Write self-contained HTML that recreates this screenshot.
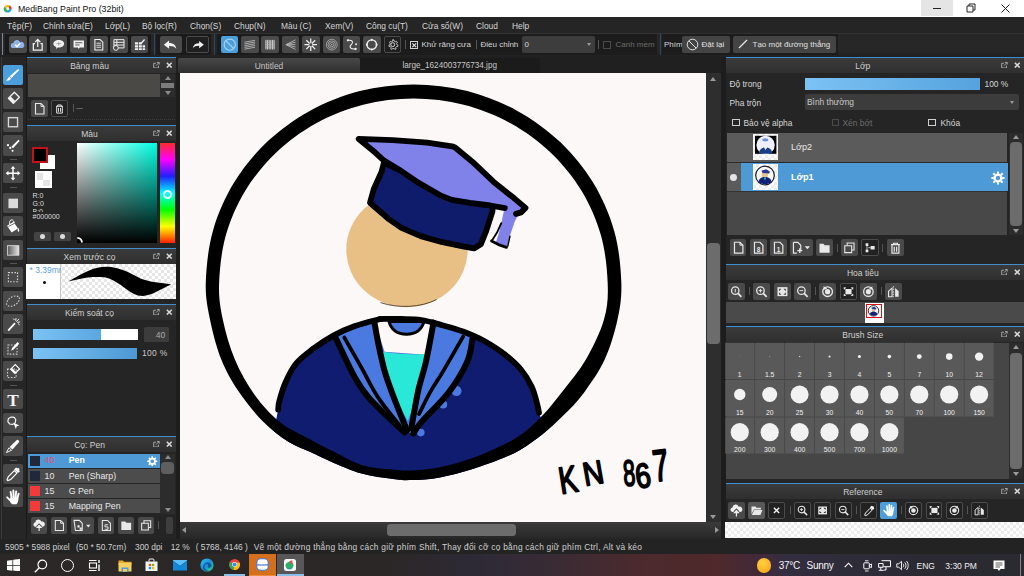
<!DOCTYPE html>
<html lang="vi">
<head>
<meta charset="utf-8">
<title>MediBang Paint Pro (32bit)</title>
<style>
*{box-sizing:border-box;margin:0;padding:0}
html,body{width:1024px;height:576px;overflow:hidden;background:#262626}
body{position:relative;font-family:"Liberation Sans",sans-serif;font-size:8.5px;color:#d8d8d8;line-height:1}
.a{position:absolute;white-space:nowrap}
#title{left:0;top:0;width:1024px;height:17px;background:#fff;color:#000}
#title .t{left:18px;top:4.800px;font-size:8.800px;color:#111}
#menu{left:0;top:17px;width:1024px;height:16px;background:#252525}
#menu span{position:absolute;top:4.600px;font-size:8.4px;color:#d6d6d6;white-space:nowrap}
#tool{left:0;top:33px;width:1024px;height:24px;background:linear-gradient(#272727 70%,#202020);border-top:1px solid #323232}
.tb{position:absolute;top:35.800px;width:18px;height:17.300px;background:#4a4a4a;border-radius:2px}
.tb.d{background:#1f1f1f;border:1px solid #4a4a4a}
.tb.s{background:#4d9fdc}
.tb svg,.lt svg,.sb svg{position:absolute;left:0;top:0;width:100%;height:100%}
.sepv{position:absolute;width:1px;background:#2f6f9f;opacity:.6}
/* panels */
.ph{position:absolute;height:16px;border-top:1px solid #3f8fce;background:linear-gradient(#3b3b3b,#2f2f2f);color:#cfcfcf;font-size:8.5px;text-align:center;padding-top:4px}
.pb{position:absolute;background:#262626}
.lt{position:absolute;left:3px;width:22px;height:22px;background:#4a4a4a;border-radius:2px}
.lt.s{background:#4d9fdc}
.sb{position:absolute;width:17px;height:17px;background:#4a4a4a;border-radius:2px}
.sb.d{background:#222;border:1px solid #4c4c4c}
#status{left:0;top:538.500px;width:1024px;height:15px;background:#232323;color:#cfcfcf;font-size:8.400px}
#task{left:0;top:553.500px;width:1024px;height:22.500px;background:linear-gradient(90deg,#2c2828 0%,#2b2727 38%,#2d2a36 47%,#392b34 54%,#4c2a2d 63%,#4f292c 70%,#40293a 74.500%,#332d40 77%,#2f2c3a 82%,#2b2a33 90%,#2a2a30 100%)}
.st{top:4px}
</style>
</head>
<body>
<!-- TITLE BAR -->
<div id="title" class="a">
  <span class="a t">MediBang Paint Pro (32bit)</span>
</div>
<!-- MENU BAR -->
<div id="menu" class="a">
  <span style="left:7px">Tệp(F)</span><span style="left:43px">Chỉnh sửa(E)</span><span style="left:105px">Lớp(L)</span><span style="left:142px">Bộ lọc(R)</span><span style="left:190px">Chọn(S)</span><span style="left:234px">Chụp(N)</span><span style="left:281px">Màu (C)</span><span style="left:325px">Xem(V)</span><span style="left:366px">Công cụ(T)</span><span style="left:422px">Cửa sổ(W)</span><span style="left:476px">Cloud</span><span style="left:512px">Help</span>
</div>
<!-- TOOLBAR -->
<div id="tool" class="a"></div>
<div class="a" style="left:2px;top:33px;width:1px;height:22px;background:#7b8a99"></div>
<div class="a" style="left:5px;top:34px;width:146px;height:21px;background:#1a1a1a"></div>
<div class="a" style="left:156px;top:34px;width:55px;height:21px;background:#1a1a1a"></div>
<div class="a" style="left:217px;top:34px;width:440px;height:21px;background:#1c1c1c"></div>
<div class="a" style="left:662px;top:34px;width:176px;height:21px;background:#1c1c1c"></div>
<div class="sepv" style="left:153.5px;top:34px;height:21px;background:#2d5f85"></div>
<div class="sepv" style="left:214px;top:34px;height:21px;background:#2d5f85"></div>
<div class="sepv" style="left:659.5px;top:34px;height:21px;background:#2d5f85"></div>
<div class="tb " style="left:9px;width:17.5px"><svg viewBox="0 0 18 18" ><path d="M4.2 12.6a2.6 2.6 0 0 1 .3-5.2 3.6 3.6 0 0 1 6.9-1 3.1 3.1 0 0 1 2.2 6.2z" fill="#8fb4ea"/><path d="M6.3 9.2l1.9 1.9 3.4-3.6" stroke="#fff" stroke-width="1.5" fill="none"/></svg></div>
<div class="tb " style="left:29.25px;width:17.5px"><svg viewBox="0 0 18 18" ><path d="M6.2 8H4.4v6.6h9.2V8h-1.8" stroke="#f2f2f2" stroke-width="1.3" fill="none"/><path d="M9 11.5V4.2M6.3 6.4L9 3.6l2.7 2.8" stroke="#f2f2f2" stroke-width="1.3" fill="none"/></svg></div>
<div class="tb " style="left:49.5px;width:17.5px"><svg viewBox="0 0 18 18" ><path d="M9 4.2c3.3 0 5.6 1.7 5.6 3.9S12.300 12 9 12c-.4 0-.8 0-1.100-.1L6.200 13.600l.2-2.100C4.600 10.800 3.400 9.600 3.400 8.100 3.400 5.900 5.700 4.200 9 4.200z" fill="#f2f2f2"/><path d="M6.500 8h5M9 6v4" stroke="#777" stroke-width=".6"/></svg></div>
<div class="tb " style="left:69.75px;width:17.5px"><svg viewBox="0 0 18 18" ><path d="M3.600 4.600h10.800v7.400H10l-1 1.500-1-1.500H3.600z" fill="#f2f2f2"/><path d="M5.300 7h7.400M5.300 9.400h4.600" stroke="#555" stroke-width="1.100"/></svg></div>
<div class="tb " style="left:90.0px;width:17.5px"><svg viewBox="0 0 18 18" ><path d="M5 3.700h5.400l2.800 2.800v8H5z" stroke="#f2f2f2" stroke-width="1.100" fill="none"/><path d="M6.600 7.500h4.800M6.600 9.600h4.800M6.600 11.700h4.800" stroke="#f2f2f2" stroke-width=".9"/></svg></div>
<div class="tb " style="left:110.25px;width:17.5px"><svg viewBox="0 0 18 18" ><path d="M4 3.800h10.500v8.600H4zM4 6.600h10.500M4 9.400h10.500M7 3.800v8.600" stroke="#f2f2f2" stroke-width="1" fill="none"/><circle cx="6" cy="12.400" r="2.500" fill="#474747" stroke="#f2f2f2" stroke-width="1"/></svg></div>
<div class="tb " style="left:130.5px;width:17.5px"><svg viewBox="0 0 18 18" ><path d="M4 6.500h3.200v2.300H4zM8 6.500h3.200v2.300H8zM4 9.600h3.200v2.300H4zM8 9.600h3.200v2.300H8zM4 12.700h3.200v1.800H4zM8 12.700h3.200v1.800H8zM12 9.600h2.500v2.300H12zM12 12.700h2.500v1.800H12z" fill="#f2f2f2"/><path d="M10.500 7.500l3.500-3.800" stroke="#f2f2f2" stroke-width="1.400"/></svg></div>
<div class="tb " style="left:159.5px;width:22.5px"><svg viewBox="0 0 22.5 18" ><path d="M3.500 9l5.500-4.300v2.600c4.500 0 7 2.200 7.500 6-1.800-2.300-4.200-3-7.500-2.900v2.900z" fill="#f2f2f2"/></svg></div>
<div class="tb d" style="left:186.25px;width:22.5px"><svg viewBox="0 0 22.5 18" ><path d="M19 9l-5.500-4.300v2.600c-4.500 0-7 2.200-7.500 6 1.800-2.300 4.200-3 7.500-2.900v2.900z" fill="#f2f2f2"/></svg></div>
<div class="tb s" style="left:220.75px;width:17.5px"><svg viewBox="0 0 18 18" ><circle cx="9" cy="9" r="5.800" stroke="#a9d2f3" stroke-width="1.200" fill="none"/><path d="M5 5l8 8" stroke="#a9d2f3" stroke-width="1.200"/></svg></div>
<div class="tb " style="left:241.1px;width:17.5px"><svg viewBox="0 0 18 18" ><path d="M3.500 6.500l11-2M3.500 8.300l11-2M3.500 10.100l11-2M3.500 11.900l11-2M3.500 13.700l11-2" stroke="#b8b8b8" stroke-width=".9"/></svg></div>
<div class="tb " style="left:261.45px;width:17.5px"><svg viewBox="0 0 18 18" ><path d="M5 4v10M6.700 4v10M8.400 4v10M10.100 4v10M11.800 4v10M13.500 4v10" stroke="#d8d8d8" stroke-width="1"/><path d="M4 6.500h10.500M4 9h10.500M4 11.500h10.500" stroke="#b8b8b8" stroke-width=".6"/></svg></div>
<div class="tb " style="left:281.8px;width:17.5px"><svg viewBox="0 0 18 18" ><path d="M14 4L4 9l10 5M14 6.500L4 9l10 2.500M4 9h10" stroke="#b8b8b8" stroke-width=".9" fill="none"/></svg></div>
<div class="tb " style="left:302.15px;width:17.5px"><svg viewBox="0 0 18 18" ><path d="M9 2.500v5M9 10.500v5M2.500 9h5M10.500 9h5M4.400 4.400l3.400 3.400M10.200 10.200l3.400 3.400M13.600 4.400l-3.400 3.400M7.800 10.200l-3.400 3.400" stroke="#f2f2f2" stroke-width="1.300"/></svg></div>
<div class="tb " style="left:322.5px;width:17.5px"><svg viewBox="0 0 18 18" ><circle cx="9" cy="9" r="5.600" stroke="#b8b8b8" stroke-width=".8" fill="none"/><circle cx="9" cy="9" r="3.900" stroke="#b8b8b8" stroke-width=".8" fill="none"/><circle cx="9" cy="9" r="2.200" stroke="#b8b8b8" stroke-width=".8" fill="none"/><circle cx="9" cy="9" r=".8" fill="#b8b8b8"/></svg></div>
<div class="tb " style="left:342.85px;width:17.5px"><svg viewBox="0 0 18 18" ><path d="M5 4.500c5-.5 6 2 3.500 4.500s-1 5 4.500 4.500" stroke="#f2f2f2" stroke-width="1.100" fill="none"/><circle cx="5" cy="4.500" r="1.200" fill="#f2f2f2"/><circle cx="13" cy="13.500" r="1.200" fill="#f2f2f2"/><circle cx="13.500" cy="8.500" r="1" fill="#f2f2f2"/></svg></div>
<div class="tb " style="left:363.2px;width:17.5px"><svg viewBox="0 0 18 18" ><circle cx="9" cy="9" r="5" stroke="#f2f2f2" stroke-width="1.300" fill="none"/><circle cx="9" cy="4" r="1.100" fill="#f2f2f2"/><circle cx="9" cy="14" r="1.100" fill="#f2f2f2"/><circle cx="4" cy="9" r="1.100" fill="#f2f2f2"/><circle cx="14" cy="9" r="1.100" fill="#f2f2f2"/></svg></div>
<div class="tb d" style="left:383.55px;width:17.5px"><svg viewBox="0 0 18 18" ><circle cx="9" cy="9" r="2.300" stroke="#f2f2f2" stroke-width="1" fill="none"/><path d="M9 3.200l1.300.2.400 1.500 1.400.800 1.400-.6.900 1.100-.8 1.300.3 1.500 1.300.8-.3 1.300-1.500.2-.9 1.200.4 1.500-1.200.6-1.100-1-1.600 0-1.100 1-1.200-.6.400-1.500-.9-1.200-1.500-.2-.3-1.300 1.300-.8.300-1.500-.8-1.300.9-1.100 1.400.6 1.400-.8.400-1.500z" stroke="#f2f2f2" stroke-width=".9" fill="none"/></svg></div>
<div class="a" style="left:404.5px;top:40px;width:1px;height:9px;background:#555"></div>
<div class="a" style="left:475.5px;top:40px;width:1px;height:9px;background:#555"></div>
<div class="a" style="left:597.5px;top:40px;width:1px;height:9px;background:#555"></div>
<div class="a" style="left:409.5px;top:40.5px;width:8.5px;height:8.5px;border:1px solid #d0d0d0"><svg class="a" style="left:0;top:0" width="6.5" height="6.5" viewBox="0 0 6.5 6.5"><path d="M1.300 1.300l3.900 3.900M5.200 1.300L1.300 5.200" stroke="#e0e0e0" stroke-width="1.200"/></svg></div>
<span class="a" style="left:421.5px;top:40.500px;font-size:8px;color:#d6d6d6">Khử răng cưa</span>
<span class="a" style="left:480.500px;top:40.500px;font-size:8px;color:#d6d6d6">Điều chỉnh</span>
<div class="a" style="left:521.5px;top:36px;width:73px;height:16.500px;background:#3d3d3d;border-radius:2px"><span class="a" style="left:3px;top:4.500px;font-size:8px;color:#d6d6d6">0</span><div class="a" style="left:65px;top:7px;border:2.500px solid transparent;border-top:3px solid #9a9a9a"></div></div>
<div class="a" style="left:602.5px;top:40.5px;width:8.5px;height:8.5px;border:1px solid #4a4a4a"></div>
<span class="a" style="left:615.500px;top:40.500px;font-size:8px;color:#6c6c6c">Canh mềm</span>
<span class="a" style="left:664px;top:40.500px;font-size:8px;color:#d6d6d6">Phím</span>
<div class="a" style="left:682px;top:36px;width:47.5px;height:16.500px;background:#444;border-radius:2px"><svg class="a" style="left:3.500px;top:2px" width="13" height="13" viewBox="0 0 13 13"><circle cx="6.500" cy="6.500" r="5.300" stroke="#e6e6e6" stroke-width="1" fill="none"/><path d="M2.800 2.800l7.400 7.400" stroke="#e6e6e6" stroke-width="1"/></svg><span class="a" style="left:19.500px;top:4.500px;font-size:8px;color:#e0e0e0">Đặt lại</span></div>
<div class="a" style="left:733px;top:36px;width:102.5px;height:16.500px;background:#444;border-radius:2px"><svg class="a" style="left:5px;top:3px" width="10" height="10" viewBox="0 0 10 10"><path d="M1 9L9 1" stroke="#e6e6e6" stroke-width="1.300"/></svg><span class="a" style="left:19.500px;top:4.500px;font-size:8px;color:#e0e0e0">Tạo một đường thẳng</span></div>
<div class="a" style="left:0;top:57px;width:27px;height:482px;background:#262626"></div>
<div class="a" style="left:1px;top:57px;width:1px;height:482px;background:#3a3a3a"></div>
<div class="a" style="left:26px;top:57px;width:1px;height:482px;background:#1a1a1a"></div>
<div class="lt s" style="top:64.8px;width:20px;height:20.400px"><svg viewBox="0 0 22 22" ><path d="M16.800 4.200l1 1-8.500 8.800-2-1.800z" fill="#fff"/><path d="M6.800 12.800l2 1.900c-1 2-3 2.600-5.400 2.300 1.700-1 1.800-3 3.400-4.200z" fill="#fff"/></svg></div>
<div class="lt " style="top:88.3px;width:20px;height:20.400px"><svg viewBox="0 0 22 22" ><path d="M12.500 4.500l5.500 5.500-6.500 6.500-5.500-5.500z" stroke="#f0f0f0" stroke-width="1.500" fill="none" stroke-linejoin="round"/><path d="M8.500 9l5 5-2.700 2.700-5-5z" fill="#f0f0f0"/></svg></div>
<div class="lt " style="top:111.8px;width:20px;height:20.400px"><svg viewBox="0 0 22 22" ><rect x="6" y="6" width="10" height="10" stroke="#d8d8d8" stroke-width="1.500" fill="none"/></svg></div>
<div class="lt " style="top:135.3px;width:20px;height:20.400px"><svg viewBox="0 0 22 22" ><path d="M17 5l1.300 1.300-7.300 8-1.800-1.600z" fill="#fff"/><circle cx="5.500" cy="11" r="1.200" fill="#fff"/><circle cx="8" cy="14" r="1.200" fill="#fff"/><circle cx="10.500" cy="17" r="1.100" fill="#fff"/></svg></div>
<div class="lt " style="top:163px;width:20px;height:20.400px"><svg viewBox="0 0 22 22" ><path d="M11 3l2.600 3h-1.800v4.200H16V8.400l3 2.600-3 2.600v-1.800h-4.200V16h1.800L11 19l-2.600-3h1.800v-4.200H6v1.800L3 11l3-2.600v1.800h4.200V6H8.400z" fill="#fff"/></svg></div>
<div class="lt " style="top:192.5px;width:20px;height:20.400px"><svg viewBox="0 0 22 22" ><rect x="6" y="6" width="10.500" height="10.500" fill="#dcdcdc"/></svg></div>
<div class="lt " style="top:216px;width:20px;height:20.400px"><svg viewBox="0 0 22 22" ><path d="M4.500 10.500l7-4.500 5 7.500-7 4.300z" fill="#fff"/><path d="M7.500 9c-.8-3 .5-5 2-5s2.500 1.500 3 3.500" stroke="#fff" stroke-width="1.100" fill="none"/><path d="M16.500 12.500c1.500 2 1.800 3.500 1 4.500-1 .8-2-.5-1-4.500z" fill="#fff"/><path d="M6 11.300l7-3.600" stroke="#4a4a4a" stroke-width=".9"/></svg></div>
<div class="lt " style="top:239.5px;width:20px;height:20.400px"><svg viewBox="0 0 22 22" ><defs><linearGradient id="lg1" x1="0" x2="1"><stop offset="0" stop-color="#5a5a5a"/><stop offset="1" stop-color="#e8e8e8"/></linearGradient></defs><rect x="5" y="6" width="12.500" height="10.500" fill="url(#lg1)" stroke="#dcdcdc" stroke-width=".9"/></svg></div>
<div class="lt " style="top:267px;width:20px;height:20.400px"><svg viewBox="0 0 22 22" ><rect x="6" y="6" width="10" height="10" stroke="#d0d0d0" stroke-width="1.300" fill="none" stroke-dasharray="1.700 1.600"/></svg></div>
<div class="lt " style="top:290.5px;width:20px;height:20.400px"><svg viewBox="0 0 22 22" ><ellipse cx="11" cy="11" rx="7.800" ry="4.600" transform="rotate(-32 11 11)" stroke="#d0d0d0" stroke-width="1.200" fill="none" stroke-dasharray="1.700 1.600"/></svg></div>
<div class="lt " style="top:314px;width:20px;height:20.400px"><svg viewBox="0 0 22 22" ><path d="M5 17.500l7.500-8.300 1.400 1.300-7.500 8.300z" fill="#fff"/><path d="M14.800 8.200l2.700-3M15.600 9l3-.5M14 7.300l.3-3M16.500 10.300l1.800 1.400M12.700 6.400l-1.400-1.600" stroke="#fff" stroke-width="1"/></svg></div>
<div class="lt " style="top:337.5px;width:20px;height:20.400px"><svg viewBox="0 0 22 22" ><rect x="5.500" y="7.500" width="10" height="10" stroke="#d0d0d0" stroke-width="1.200" fill="none" stroke-dasharray="1.700 1.600"/><path d="M16 4.200l1.800 1.800-6 6.500-2.800 1.300 1-2.900z" fill="#fff"/></svg></div>
<div class="lt " style="top:361px;width:20px;height:20.400px"><svg viewBox="0 0 22 22" ><rect x="5" y="8.500" width="9.500" height="9.500" stroke="#d0d0d0" stroke-width="1.200" fill="none" stroke-dasharray="1.700 1.600"/><path d="M13.500 3.800l4.700 4.700-5 5-4.700-4.700z" stroke="#fff" stroke-width="1.300" fill="none"/><path d="M10.300 7.800l4 4-1.800 1.800-4-4z" fill="#fff"/></svg></div>
<div class="lt " style="top:389px;width:20px;height:20.400px"><svg viewBox="0 0 22 22" ><text x="11" y="18" font-family="Liberation Serif,serif" font-weight="bold" font-size="19" fill="#f4f4f4" text-anchor="middle">T</text></svg></div>
<div class="lt " style="top:412.5px;width:20px;height:20.400px"><svg viewBox="0 0 22 22" ><path d="M9 4.200l3.300.4 1.800 2.500-.6 3.300-2.700 1.900-3.500-.5-2-2.600.6-3.300z" stroke="#fff" stroke-width="1.200" fill="none"/><path d="M11.500 10.500l6.500 3-2.900.8-1 3z" fill="#fff"/></svg></div>
<div class="lt " style="top:436px;width:20px;height:20.400px"><svg viewBox="0 0 22 22" ><path d="M15.500 3.800c1.600.2 2.500 1.300 2.300 2.700l-7.300 8-3.200-2.700z" fill="#fff"/><path d="M6.500 12.800l3 2.600-5.700 2.600z" stroke="#fff" stroke-width="1" fill="none"/></svg></div>
<div class="lt " style="top:463.5px;width:20px;height:20.400px"><svg viewBox="0 0 22 22" ><path d="M14.500 3.500l1 1 1.700-.3 1 1-.5 1.600 1 1-2.200 2-4.300-4.300z" fill="#fff"/><path d="M12.500 7l2.800 2.800-6.800 7-3.200 1.300-.9-.9 1.300-3.200z" stroke="#fff" stroke-width="1.300" fill="none"/></svg></div>
<div class="lt " style="top:487px;width:20px;height:20.400px"><svg viewBox="0 0 22 22" ><g stroke="#fff" stroke-width="2.100" stroke-linecap="round" fill="none"><path d="M9.300 11.500L8.400 5.200M11.600 11L11.400 3.600M13.800 11.300L14.500 4.600M15.700 12.300L17.200 7.200M8.200 14.800L4.600 11.200"/></g><path d="M7.800 11.500C6.800 15 8 17.500 10.300 18.800h4.500c2-2 2.500-5 2-7.800z" fill="#fff"/></svg></div>
<div class="a" style="left:9.500px;top:159.3px;width:7.500px;height:1px;background:#555"></div>
<div class="a" style="left:9.500px;top:187.3px;width:7.500px;height:1px;background:#555"></div>
<div class="a" style="left:9.500px;top:262.8px;width:7.500px;height:1px;background:#555"></div>
<div class="a" style="left:9.500px;top:385px;width:7.500px;height:1px;background:#555"></div>
<div class="a" style="left:9.500px;top:459.6px;width:7.500px;height:1px;background:#555"></div>
<div class="pb" style="left:27px;top:57px;width:149px;height:482px;background:#252525"></div>
<div class="ph" style="left:27px;top:57px;width:149px"><span class="a" style="left:0;width:125px;top:3.800px;text-align:center">Bảng màu</span><svg class="a" style="right:16px;top:3.500px" width="6.800" height="6.500" viewBox="0 0 8 8"><path d="M3.500 1.500H.700v5.800h5.800V4.500" stroke="#bbb" stroke-width="1" fill="none"/><path d="M3.500 4.500L7.300.7M4.800.6h2.600v2.600" stroke="#bbb" stroke-width="1" fill="none"/></svg><svg class="a" style="right:3.500px;top:3.700px" width="6.500" height="6.300" viewBox="0 0 7 7"><path d="M.8.800l5.400 5.400M6.200.8L.8 6.200" stroke="#d8d8d8" stroke-width="1.700"/></svg></div>
<div class="a" style="left:28px;top:74px;width:131.500px;height:23.300px;background:#4b4946"></div>
<div class="a" style="left:160px;top:74px;width:14.500px;height:23.300px;background:#2c2c2c"></div>
<div class="a" style="left:164.500px;top:75.500px;border:3px solid transparent;border-top:0;border-bottom:4.500px solid #8c8c8c"></div>
<div class="a" style="left:160.500px;top:83px;width:13.500px;height:5px;background:#7c7c7c"></div>
<div class="a" style="left:164.500px;top:91px;border:3px solid transparent;border-bottom:0;border-top:4.500px solid #8c8c8c"></div>
<div class="sb" style="left:30.700px;top:99.700px"><svg viewBox="0 0 17 17" ><path d="M4.500 3.500h5.500l3 3v7.500H4.500z" stroke="#e8e8e8" stroke-width="1.100" fill="none"/><path d="M10 3.500v3h3" stroke="#e8e8e8" stroke-width=".9" fill="none"/></svg></div>
<div class="sb d" style="left:51.200px;top:99.700px"><svg viewBox="0 0 17 17" ><path d="M4.500 6h8M6.500 6V4.500h4V6M5.300 6.300v7.400h6.400V6.300M7.300 7.800v4.500M9.700 7.800v4.500" stroke="#e8e8e8" stroke-width="1.100" fill="none"/></svg></div>
<div class="a" style="left:72.500px;top:104px;width:1px;height:8px;background:#555"></div>
<span class="a" style="left:76px;top:104px;font-size:8px;color:#999;letter-spacing:-.5px">---</span>
<div class="a" style="left:28px;top:118.500px;width:147px;height:0;border-top:1px dotted #3c3c3c"></div>
<div class="ph" style="left:27px;top:125px;width:149px"><span class="a" style="left:0;width:125px;top:3.800px;text-align:center">Màu</span><svg class="a" style="right:16px;top:3.500px" width="6.800" height="6.500" viewBox="0 0 8 8"><path d="M3.500 1.500H.700v5.800h5.800V4.500" stroke="#bbb" stroke-width="1" fill="none"/><path d="M3.500 4.500L7.300.7M4.800.6h2.600v2.600" stroke="#bbb" stroke-width="1" fill="none"/></svg><svg class="a" style="right:3.500px;top:3.700px" width="6.500" height="6.300" viewBox="0 0 7 7"><path d="M.8.800l5.400 5.400M6.200.8L.8 6.200" stroke="#d8d8d8" stroke-width="1.700"/></svg></div>
<div class="a" style="left:39.500px;top:154.500px;width:15px;height:14.500px;background:#fff"></div>
<div class="a" style="left:32px;top:147px;width:16px;height:16px;background:#000;border:2px solid #c4121a"></div>
<div class="a" style="left:34.500px;top:171.200px;width:17.500px;height:17px;background:#fff"><div class="a" style="left:2px;top:2px;width:6.700px;height:6.500px;background:#e4e4e4"></div><div class="a" style="left:8.700px;top:8.500px;width:6.700px;height:6.500px;background:#e4e4e4"></div></div>
<span class="a" style="left:32.500px;top:191.500px;font-size:7px;color:#ddd">R:0</span>
<span class="a" style="left:32.500px;top:199.700px;font-size:7px;color:#ddd">G:0</span>
<div class="a" style="left:32.500px;top:208px;width:20px;height:3.500px;overflow:hidden"><span class="a" style="left:0;top:0;font-size:7px;color:#ddd">B:0</span></div>
<span class="a" style="left:32.500px;top:212.700px;font-size:7px;color:#ddd">#000000</span>
<div class="a" style="left:34px;top:232px;width:16.700px;height:9.300px;background:#444;border-radius:1.500px"><div class="a" style="left:6px;top:2px;width:5px;height:5px;border-radius:50%;background:#ddd"></div></div>
<div class="a" style="left:54.200px;top:232px;width:16.700px;height:9.300px;background:#444;border-radius:1.500px"><div class="a" style="left:6px;top:2px;width:5px;height:5px;border-radius:50%;background:#ddd"></div></div>
<div class="a" style="left:77px;top:142.500px;width:79.800px;height:100px;background:linear-gradient(to top,#000,rgba(0,0,0,0)),linear-gradient(to right,#fff,#00ffe2)"></div>
<div class="a" style="left:160px;top:142.500px;width:14.500px;height:100px;background:linear-gradient(to bottom,#ff2a2a 0%,#ff00ff 16.600%,#2020ff 33.300%,#00ffff 50%,#00ff00 66.600%,#ffff00 83.300%,#ff2000 100%)"></div>
<div class="a" style="left:162.800px;top:189.800px;width:9.400px;height:9.400px;border-radius:50%;border:2px solid #f0ffff"></div>
<svg class="a" style="left:76px;top:236px" width="8" height="8" viewBox="76 236 8 8"><path d="M77.300 237.800a5 5 0 0 1 4.700 4.700" stroke="#fff" stroke-width="1.800" fill="none"/></svg>
<div class="ph" style="left:27px;top:248px;width:149px"><span class="a" style="left:0;width:125px;top:3.800px;text-align:center">Xem trước cọ</span><svg class="a" style="right:16px;top:3.500px" width="6.800" height="6.500" viewBox="0 0 8 8"><path d="M3.500 1.500H.700v5.800h5.800V4.500" stroke="#bbb" stroke-width="1" fill="none"/><path d="M3.500 4.500L7.300.7M4.800.6h2.600v2.600" stroke="#bbb" stroke-width="1" fill="none"/></svg><svg class="a" style="right:3.500px;top:3.700px" width="6.500" height="6.300" viewBox="0 0 7 7"><path d="M.8.800l5.400 5.400M6.200.8L.8 6.200" stroke="#d8d8d8" stroke-width="1.700"/></svg></div>
<div class="a" style="left:26.300px;top:264.300px;width:149.500px;height:35.200px;background-color:#fff;background-image:linear-gradient(45deg,#e6e6e6 25%,transparent 25%,transparent 75%,#e6e6e6 75%),linear-gradient(45deg,#e6e6e6 25%,transparent 25%,transparent 75%,#e6e6e6 75%);background-size:6px 6px;background-position:0 0,3px 3px"></div>
<div class="a" style="left:26.300px;top:264.300px;width:35px;height:35.200px;background:#fff;border-right:1px solid #c8c8c8"></div>
<div class="a" style="left:26.300px;top:264.300px;width:35px;height:14px;overflow:hidden"><span class="a" style="left:3.200px;top:2.200px;font-size:8.500px;color:#5aa2dc">* 3.39mm</span></div>
<div class="a" style="left:61.500px;top:264.300px;width:114px;height:10px;background:transparent"></div>
<div class="a" style="left:42.700px;top:280.500px;width:3.200px;height:3.200px;border-radius:50%;background:#111"></div>
<svg class="a" style="left:61.500px;top:264.300px" width="114.300" height="35.200" viewBox="61.500 264.300 114.300 35.200"><path d="M68.700 281.300C76 277 82 273.500 87.500 271.200c7-3 13-4.400 20-4.200 6.500.3 12 2 17.500 4.300 5.500 2.300 10 5 15 7.400 5 2 10 3 15 3.800 5 .8 10.500 1.300 15.700 2.200-5 2.300-10.500 5.300-15.700 7.800-4.500 2-8.500 3.500-12.500 3.800-3.500 0-7-.8-10-2.500-4.500-2.500-8.500-6-12.500-8.800-5-3.300-10-6.500-15-7.300-6-.7-11.500-.5-17.500 0-6.500.8-12.500 2.300-18.800 3.800z" fill="#000"/></svg>
<div class="ph" style="left:27px;top:304px;width:149px"><span class="a" style="left:0;width:125px;top:3.800px;text-align:center">Kiểm soát cọ</span><svg class="a" style="right:16px;top:3.500px" width="6.800" height="6.500" viewBox="0 0 8 8"><path d="M3.500 1.500H.700v5.800h5.800V4.500" stroke="#bbb" stroke-width="1" fill="none"/><path d="M3.500 4.500L7.300.7M4.800.6h2.600v2.600" stroke="#bbb" stroke-width="1" fill="none"/></svg><svg class="a" style="right:3.500px;top:3.700px" width="6.500" height="6.300" viewBox="0 0 7 7"><path d="M.8.800l5.400 5.400M6.200.8L.8 6.200" stroke="#d8d8d8" stroke-width="1.700"/></svg></div>
<div class="a" style="left:33.200px;top:328.700px;width:105px;height:11.300px;background:#fff"></div>
<div class="a" style="left:33.200px;top:328.700px;width:68px;height:11.300px;background:linear-gradient(to right,#7cc3f4,#5aa6e0)"></div>
<div class="a" style="left:143.700px;top:327px;width:25px;height:15px;background:#3c3c3c;border-radius:1.500px"><span class="a" style="right:3.500px;top:3.500px;font-size:8.500px;color:#aaa">40</span></div>
<div class="a" style="left:33.200px;top:348px;width:103.800px;height:10.800px;background:linear-gradient(to right,#7cc3f4,#4c98d4)"></div>
<span class="a" style="left:142px;top:349px;font-size:8.500px;color:#c8c8c8;letter-spacing:.3px">100 %</span>
<div class="ph" style="left:27px;top:436px;width:149px"><span class="a" style="left:0;width:125px;top:3.800px;text-align:center">Cọ: Pen</span><svg class="a" style="right:16px;top:3.500px" width="6.800" height="6.500" viewBox="0 0 8 8"><path d="M3.500 1.500H.700v5.800h5.800V4.500" stroke="#bbb" stroke-width="1" fill="none"/><path d="M3.500 4.500L7.300.7M4.800.6h2.600v2.600" stroke="#bbb" stroke-width="1" fill="none"/></svg><svg class="a" style="right:3.500px;top:3.700px" width="6.500" height="6.300" viewBox="0 0 7 7"><path d="M.8.800l5.400 5.400M6.200.8L.8 6.200" stroke="#d8d8d8" stroke-width="1.700"/></svg></div>
<div class="a" style="left:28px;top:453.5px;width:131.500px;height:14.300px;background:#4d9ad6"><div class="a" style="left:2px;top:2px;width:10px;height:10px;background:#20283a"></div><span class="a" style="left:16.500px;top:2.800px;font-size:8.800px;color:#ea4a72">40</span><span class="a" style="left:40.700px;top:2.800px;font-size:8.800px;color:#fff;font-weight:bold">Pen</span><svg class="a" style="left:119px;top:2px" width="10.500" height="10.500" viewBox="0 0 10 10"><circle cx="5" cy="5" r="2.600" stroke="#fff" stroke-width="1.700" fill="none"/><path d="M5 .3v9.400M.3 5h9.400M1.700 1.700l6.600 6.600M8.300 1.700L1.700 8.300" stroke="#fff" stroke-width="1.500" stroke-dasharray="1.800 5.800 1.800 9"/></svg></div>
<div class="a" style="left:28px;top:469px;width:131.500px;height:14.300px;background:#4c4c4c"><div class="a" style="left:2px;top:2px;width:10px;height:10px;background:#20283a"></div><span class="a" style="left:16.500px;top:2.800px;font-size:8.800px;color:#e8e8e8">10</span><span class="a" style="left:40.700px;top:2.800px;font-size:8.800px;color:#e8e8e8;">Pen (Sharp)</span></div>
<div class="a" style="left:28px;top:484px;width:131.500px;height:14.300px;background:#4c4c4c"><div class="a" style="left:2px;top:2px;width:10px;height:10px;background:#f23a3a"></div><span class="a" style="left:16.500px;top:2.800px;font-size:8.800px;color:#e8e8e8">15</span><span class="a" style="left:40.700px;top:2.800px;font-size:8.800px;color:#e8e8e8;">G Pen</span></div>
<div class="a" style="left:28px;top:499px;width:131.500px;height:14.300px;background:#4c4c4c"><div class="a" style="left:2px;top:2px;width:10px;height:10px;background:#f23a3a"></div><span class="a" style="left:16.500px;top:2.800px;font-size:8.800px;color:#e8e8e8">15</span><span class="a" style="left:40.700px;top:2.800px;font-size:8.800px;color:#e8e8e8;">Mapping Pen</span></div>
<div class="a" style="left:160px;top:453.500px;width:14.500px;height:60px;background:#2c2c2c"></div>
<div class="a" style="left:164.500px;top:455px;border:3px solid transparent;border-top:0;border-bottom:4.500px solid #8c8c8c"></div>
<div class="a" style="left:161px;top:462px;width:12.500px;height:12px;background:#5e5e5e;border-radius:3.500px"></div>
<div class="a" style="left:164.500px;top:507.500px;border:3px solid transparent;border-bottom:0;border-top:4.500px solid #8c8c8c"></div>
<div class="sb" style="left:31.200px;top:517px;height:16.500px;width:16.300px"><svg viewBox="0 0 17 17" ><path d="M4.200 10a2.300 2.300 0 0 1 .3-4.500 3.200 3.200 0 0 1 6.200-.8 2.700 2.700 0 0 1 1.800 5.300z" fill="#f0f0f0"/><path d="M8.500 14V9M6.300 10.500l2.200-2.300 2.200 2.300" stroke="#4a4a4a" stroke-width="2.600" fill="none"/><path d="M8.500 14.500V9.500M6.500 10.800l2-2.200 2 2.200z" stroke="#f0f0f0" stroke-width="1.200" fill="#f0f0f0"/></svg></div>
<div class="sb" style="left:51.200px;top:517px;height:16.500px;width:16.300px"><svg viewBox="0 0 17 17" ><path d="M4.500 3.500h5.500l3 3v7.500H4.500z" stroke="#e8e8e8" stroke-width="1.100" fill="none"/><path d="M10 3.500v3h3" stroke="#e8e8e8" stroke-width=".9" fill="none"/></svg></div>
<div class="sb" style="left:71.200px;top:517px;height:16.500px;width:22.500px"><svg viewBox="0 0 23 17" ><path d="M3 3.500h5.500l3 3v7.500H4.500z" stroke="#e8e8e8" stroke-width="1.100" fill="none"/><path d="M6.500 8.500h2.300v2.300H6.500zM8.800 10.800h2.300v2.300H8.800z" fill="#e8e8e8"/><path d="M15.500 8h4.500l-2.250 2.800z" fill="#e8e8e8"/></svg></div>
<div class="sb" style="left:97.500px;top:517px;height:16.500px;width:16.300px"><svg viewBox="0 0 17 17" ><path d="M4.500 3.500h5.500l3 3v7.500H4.500z" stroke="#e8e8e8" stroke-width="1.100" fill="none"/><path d="M10.500 8H7.300v2.200h3.200v2.500H7" stroke="#e8e8e8" stroke-width="1" fill="none"/></svg></div>
<div class="sb" style="left:117.500px;top:517px;height:16.500px;width:16.300px"><svg viewBox="0 0 17 17" ><path d="M3.500 4.500h4l1.200 1.500h5v7.500H3.500z" fill="#e8e8e8"/></svg></div>
<div class="sb" style="left:137.500px;top:517px;height:16.500px;width:16.300px"><svg viewBox="0 0 17 17" ><path d="M3.800 6.500h7v7h-7z" stroke="#e8e8e8" stroke-width="1.100" fill="none"/><path d="M6.200 6.300V3.800h7v7h-2.300" stroke="#e8e8e8" stroke-width="1.100" fill="none"/></svg></div>
<div class="a" style="left:158px;top:521px;width:1px;height:8px;background:#555"></div>
<div class="a" style="left:166px;top:517px;width:6.500px;height:17px;background:#3e3e3e;border-radius:2px"></div>
<div class="a" style="left:176px;top:57px;width:550px;height:17px;background:#202020"></div>
<div class="a" style="left:178px;top:58px;width:182px;height:16px;background:linear-gradient(#484848,#2c2c2c);border-radius:2px 2px 0 0"><span class="a" style="left:0;width:182px;text-align:center;top:4px;font-size:8.400px;color:#c4c4c4">Untitled</span></div>
<div class="a" style="left:360px;top:58px;width:180px;height:16px;background:#1b1b1b"><span class="a" style="left:42.500px;top:4.200px;font-size:8.150px;color:#c8c8c8">large_1624003776734.jpg</span></div>
<div class="a" style="left:176px;top:73.400px;width:4px;height:466px;background:#1d1d1d"></div>
<div class="a" style="left:179.500px;top:73.400px;width:526px;height:448.300px;background:#fbf8f7;overflow:hidden">
<svg class="a" style="left:0;top:0" width="526" height="448.300" viewBox="179.500 73.400 526 448.300">
<defs><clipPath id="inner"><path d="M205.3 282.6C205.8 267.8 207.7 247.9 212.4 231.4C217.0 214.9 224.2 198.5 233.1 183.7C242.1 168.9 253.5 154.8 266.1 142.7C278.8 130.7 293.7 119.8 309.2 111.3C324.7 102.8 342.0 96.0 359.3 91.5C376.6 87.1 395.1 84.8 413.0 84.8C431.0 84.8 449.5 87.1 466.8 91.5C484.1 96.0 501.4 102.8 516.9 111.3C532.4 119.8 547.3 130.7 560.0 142.7C572.6 154.8 584.0 168.9 593.0 183.7C601.9 198.5 609.1 214.9 613.7 231.4C618.4 247.9 620.3 267.8 620.8 282.6C621.3 297.4 619.8 307.1 617.0 320.0C614.2 332.9 609.8 347.8 604.2 360.0C598.6 372.2 590.2 383.9 583.3 393.3C576.3 402.7 569.4 409.3 562.5 416.2C555.6 423.2 548.7 429.4 541.7 435.0C534.8 440.6 527.8 445.5 520.8 449.6C513.8 453.7 508.4 456.1 500.0 459.5C491.6 462.9 480.7 466.9 470.6 470.0C460.5 473.1 449.3 476.1 439.4 477.8C429.5 479.6 419.1 480.2 411.2 480.5C403.4 480.8 400.8 480.5 392.5 479.4C384.2 478.3 371.7 476.8 361.2 473.9C350.8 471.0 338.5 465.4 330.0 461.8C321.5 458.2 317.1 455.8 310.0 452.5C302.9 449.2 295.4 447.1 287.5 442.0C279.6 436.9 270.8 430.5 262.5 422.0C254.2 413.5 244.4 401.3 237.5 391.0C230.6 380.7 225.5 371.8 220.8 360.0C216.1 348.2 212.1 332.9 209.5 320.0C206.9 307.1 204.8 297.4 205.3 282.6z"/></clipPath></defs>
<!-- face -->
<ellipse cx="406.500" cy="250" rx="60.700" ry="57.600" fill="#e8bf84"/>
<path d="M380 303c18 6 40 5 56-3" stroke="#1a1408" stroke-width="1" fill="none" opacity=".7"/>
<!-- body -->
<g clip-path="url(#inner)">
<path d="M379.800 319.400L353.750 326.700 332.900 336 312.100 349.600 295.400 364.200 285 382.900 278.750 401.700 277.700 410 260 500H570L538.500 413.100 536.500 403.750 531.250 387.100 520.800 370.400 504.200 354.800 483.300 341.250 462.500 331.900 441.700 325.600 420.800 320.400 400 319.400z" fill="#101c70"/>
</g>
<!-- lapels -->
<path d="M334.500 337L379.800 319.400 432.500 320 472 339.200 466.700 362.100 457.400 376 447.900 393.300 442.500 397.250 420.800 422.500 412.800 434 406 433 400.300 431.600 369 398.800 353.400 376 347.200 366z" fill="#4a7ae0"/>
<circle cx="456" cy="391.500" r="5" fill="#4a7ae0"/><circle cx="442.700" cy="404.800" r="4" fill="#4a7ae0"/><circle cx="420.300" cy="433" r="3.800" fill="#4a7ae0"/>
<!-- white collar + neck -->
<path d="M374 321h59.500l-4.500 34.500-45-3.300z" fill="#fbf8f7"/>
<path d="M388.500 322c2.500 8.500 9 12.600 17.500 12.600s15-4.100 17.500-12.600z" fill="#4a7ae0" stroke="#000" stroke-width="3"/>
<!-- cyan -->
<path d="M382.500 352.200c14 2.500 29 2.800 44.300 2.500l-5 20-6 25-8.500 21.500-14.800-25.500-7-29.500z" fill="#2ae8d8"/>
<!-- outlines -->
<g stroke="#000" fill="none" stroke-linecap="round" stroke-linejoin="round">
<path d="M379.8 319.4C375.5 320.6 361.6 323.9 353.8 326.7C345.9 329.5 339.8 332.2 332.9 336.0C326.0 339.8 318.4 344.9 312.1 349.6C305.9 354.3 299.9 358.6 295.4 364.2C290.9 369.8 287.8 376.6 285.0 382.9C282.2 389.1 280.0 397.2 278.8 401.7C277.5 406.2 277.9 408.6 277.7 410.0" stroke-width="5.8"/>
<path d="M379.8 319.4C383.2 319.4 393.2 319.2 400.0 319.4C406.8 319.6 413.9 319.4 420.8 320.4C427.8 321.4 434.8 323.7 441.7 325.6C448.6 327.5 455.6 329.3 462.5 331.9C469.4 334.5 476.4 337.4 483.3 341.2C490.2 345.1 497.9 349.9 504.2 354.8C510.4 359.7 516.3 365.0 520.8 370.4C525.3 375.8 528.6 381.5 531.2 387.1C533.9 392.7 535.3 399.4 536.5 403.8C537.7 408.1 538.2 411.5 538.5 413.1" stroke-width="5.8"/>
<path d="M334.8 337.5C337.9 343.9 347.7 365.8 353.4 376.0C359.1 386.2 360.6 389.3 369.0 398.8C377.4 408.3 398.2 427.1 404.0 432.8" stroke-width="6"/>
<path d="M343.8 338.0C346.8 343.2 356.0 359.2 361.5 369.0C367.0 378.8 370.8 387.6 377.0 397.0C383.2 406.4 395.1 420.7 398.8 425.4" stroke-width="3.8"/>
<path d="M373.8 322.0C374.5 325.8 376.3 336.8 378.0 345.0C379.7 353.2 381.6 362.6 384.0 371.0C386.4 379.4 388.8 385.7 392.5 395.7C396.2 405.7 404.2 425.1 406.5 431.0" stroke-width="6"/>
<path d="M433.0 323.0C431.8 329.5 428.1 350.5 425.5 362.0C422.9 373.5 419.9 380.8 417.5 392.0C415.1 403.2 411.9 422.8 410.8 429.0" stroke-width="6"/>
<path d="M462.6 337.0C459.3 342.7 448.4 361.8 443.0 371.0C437.6 380.2 434.1 384.8 430.0 392.0C425.9 399.2 420.4 410.8 418.5 414.5" stroke-width="3.8"/>
<path d="M472.0 339.2C471.1 343.0 470.7 353.1 466.7 362.1C462.7 371.1 455.5 383.2 447.9 393.3C440.2 403.4 426.6 415.7 420.8 422.5C415.0 429.3 414.1 432.1 412.8 434.0" stroke-width="6"/>
</g>
<!-- ring -->
<path fill="#000" fill-rule="evenodd" d="M205.3 282.6C205.8 267.8 207.7 247.9 212.4 231.4C217.0 214.9 224.2 198.5 233.1 183.7C242.1 168.9 253.5 154.8 266.1 142.7C278.8 130.7 293.7 119.8 309.2 111.3C324.7 102.8 342.0 96.0 359.3 91.5C376.6 87.1 395.1 84.8 413.0 84.8C431.0 84.8 449.5 87.1 466.8 91.5C484.1 96.0 501.4 102.8 516.9 111.3C532.4 119.8 547.3 130.7 560.0 142.7C572.6 154.8 584.0 168.9 593.0 183.7C601.9 198.5 609.1 214.9 613.7 231.4C618.4 247.9 620.3 267.8 620.8 282.6C621.3 297.4 619.8 307.1 617.0 320.0C614.2 332.9 609.8 347.8 604.2 360.0C598.6 372.2 590.2 383.9 583.3 393.3C576.3 402.7 569.4 409.3 562.5 416.2C555.6 423.2 548.7 429.4 541.7 435.0C534.8 440.6 527.8 445.5 520.8 449.6C513.8 453.7 508.4 456.1 500.0 459.5C491.6 462.9 480.7 466.9 470.6 470.0C460.5 473.1 449.3 476.1 439.4 477.8C429.5 479.6 419.1 480.2 411.2 480.5C403.4 480.8 400.8 480.5 392.5 479.4C384.2 478.3 371.7 476.8 361.2 473.9C350.8 471.0 338.5 465.4 330.0 461.8C321.5 458.2 317.1 455.8 310.0 452.5C302.9 449.2 295.4 447.1 287.5 442.0C279.6 436.9 270.8 430.5 262.5 422.0C254.2 413.5 244.4 401.3 237.5 391.0C230.6 380.7 225.5 371.8 220.8 360.0C216.1 348.2 212.1 332.9 209.5 320.0C206.9 307.1 204.8 297.4 205.3 282.6z M218.6 284.0C219.1 270.0 220.9 251.5 225.2 236.1C229.6 220.7 236.2 205.3 244.6 191.4C253.0 177.6 263.7 164.4 275.5 153.1C287.4 141.8 301.2 131.7 315.7 123.7C330.3 115.7 346.4 109.3 362.6 105.2C378.8 101.1 396.1 98.9 412.9 98.9C429.7 98.9 447.0 101.1 463.2 105.2C479.4 109.3 495.5 115.7 510.1 123.7C524.6 131.7 538.4 141.8 550.3 153.1C562.1 164.4 572.8 177.6 581.2 191.4C589.6 205.3 596.2 220.7 600.6 236.1C604.9 251.5 606.7 270.0 607.2 284.0C607.7 298.0 607.1 307.3 603.5 320.0C599.9 332.7 592.2 348.1 585.4 360.0C578.6 371.9 569.8 381.9 562.5 391.2C555.2 400.6 548.7 409.0 541.7 416.2C534.8 423.5 527.8 430.0 520.8 435.0C513.8 440.0 508.4 442.5 500.0 446.5C491.6 450.5 480.7 455.5 470.6 459.0C460.5 462.5 449.3 465.7 439.4 467.7C429.5 469.7 419.1 470.4 411.2 470.8C403.4 471.2 400.8 470.9 392.5 470.0C384.2 469.1 371.7 468.6 361.2 465.3C350.8 462.1 339.4 455.1 330.0 450.5C320.6 445.9 313.5 442.2 305.0 437.5C296.5 432.8 287.7 429.5 279.2 422.5C270.7 415.5 261.7 405.8 254.2 395.4C246.7 385.0 239.7 372.6 234.4 360.0C229.1 347.4 224.9 332.7 222.3 320.0C219.7 307.3 218.1 298.0 218.6 284.0z"/>
<!-- cap band -->
<path d="M383.400 163L381.100 172.100 373.300 189.400 369.900 201.600 369.500 203.200 387.300 218.700 401 228.300 420.200 236.500 442 242.600 462.500 246.700 473.500 248.800 480.300 244.700 485.800 231 491.900 211.900 492.500 205 440 190z" fill="#0f1b6b" stroke="#000" stroke-width="5.800" stroke-linejoin="round"/>
<!-- tassel -->
<path d="M504.700 205L501.250 221.700 497.800 235.600 495 243.900 506.800 246.700 509.600 235.600 514.400 221.700 517.900 214.700 524 209 515 200z" fill="#8181ea"/>
<g stroke="#000" fill="none" stroke-linecap="round" stroke-linejoin="round"><path d="M500.800 223.500L496.500 233 491.500 240.800" stroke-width="1.800"/><path d="M491 241.300L498 245 506 247.800" stroke-width="2.800"/><path d="M507.300 246.500L509.500 236.500" stroke-width="1.400"/></g>
<!-- cap top -->
<path d="M358.200 139.300L392.100 140.600 426.800 143 451.500 146.700 454.600 147.800 472.100 162.300 492.900 182.100 513.750 198.750 525 208.300 520.500 213 505.400 208.500 489.900 205.900 469.400 203.300 451.250 200.300 441 196.300 418.100 183.200 400.800 171.500 383.400 161 374.700 153z" fill="#8181ea"/>
<path d="M504.400 208.500L489.900 205.900 469.400 203.300 451.250 200.300 441 196.300 418.100 183.200 400.800 171.500 383.400 161 374.700 153 358.200 139.300 392.100 140.600 426.800 143 451.500 146.700 454.600 147.800 472.100 162.300 492.900 182.100 513.750 198.750 525 208.300 520.500 212.800 515.500 214.300" fill="none" stroke="#000" stroke-width="5.800" stroke-linejoin="round" stroke-linecap="round"/>
<!-- signature -->
<g font-family="Liberation Sans,sans-serif" font-size="30" fill="#000" stroke="#000" stroke-width="1.500" stroke-linejoin="round">
<text transform="translate(560.500 494.500) rotate(-9) scale(.92 1.260)">K</text>
<text transform="translate(584.500 486.500) rotate(-10) scale(.95 1.100)">N</text>
<text transform="translate(623.500 486.500) rotate(-4) scale(.72 1.220)">8</text>
<text transform="translate(636.500 489) rotate(-8) scale(.92 1.150)">6</text>
<text transform="translate(654 482) rotate(-6) scale(.92 1.480)">7</text>
</g>
</svg>
</div>
<div class="a" style="left:705.500px;top:73.400px;width:15.700px;height:448.300px;background:#2e2e2e"></div>
<div class="a" style="left:710px;top:76.500px;border:3.500px solid transparent;border-top:0;border-bottom:4.500px solid #9a9a9a"></div>
<div class="a" style="left:707px;top:243px;width:12.800px;height:100.500px;background:#6c6c6c;border-radius:3.500px"></div>
<div class="a" style="left:710px;top:515px;border:3.500px solid transparent;border-bottom:0;border-top:4.500px solid #9a9a9a"></div>
<div class="a" style="left:179.500px;top:521.700px;width:542px;height:16.300px;background:linear-gradient(#3a3a3a,#282828)"></div>
<div class="a" style="left:182px;top:526.500px;border:3.500px solid transparent;border-left:0;border-right:4.500px solid #9a9a9a"></div>
<div class="a" style="left:387px;top:523.800px;width:129px;height:12.400px;background:#6c6c6c;border-radius:3.500px"></div>
<div class="a" style="left:714.500px;top:526.500px;border:3.500px solid transparent;border-right:0;border-left:4.500px solid #9a9a9a"></div>
<div class="a" style="left:721.200px;top:57px;width:4.500px;height:482px;background:#1d1d1d"></div>
<div class="pb" style="left:725.6px;top:57px;width:298.4px;height:482px;background:#252525"></div>
<div class="ph" style="left:725.6px;top:57px;width:298.4px"><span class="a" style="left:0;width:274.4px;top:3.800px;text-align:center">Lớp</span><svg class="a" style="right:16px;top:3.500px" width="6.800" height="6.500" viewBox="0 0 8 8"><path d="M3.500 1.500H.700v5.800h5.800V4.500" stroke="#bbb" stroke-width="1" fill="none"/><path d="M3.500 4.500L7.300.7M4.800.6h2.600v2.600" stroke="#bbb" stroke-width="1" fill="none"/></svg><svg class="a" style="right:3.500px;top:3.700px" width="6.500" height="6.300" viewBox="0 0 7 7"><path d="M.8.800l5.400 5.400M6.200.8L.8 6.200" stroke="#d8d8d8" stroke-width="1.700"/></svg></div>
<span class="a" style="left:729.500px;top:80px;font-size:8.400px;color:#d6d6d6">Độ trong</span>
<div class="a" style="left:804.500px;top:77.700px;width:175.200px;height:12.800px;background:linear-gradient(to right,#7cc3f4,#55a2de)"></div>
<span class="a" style="left:984.500px;top:80px;font-size:8.400px;color:#d6d6d6">100 %</span>
<span class="a" style="left:729.500px;top:98.500px;font-size:8.400px;color:#d6d6d6">Pha trộn</span>
<div class="a" style="left:804.500px;top:94.300px;width:214px;height:16.200px;background:#3c3c3c;border-radius:2px"><span class="a" style="left:2.500px;top:4.200px;font-size:8.400px;color:#c8c8c8">Bình thường</span><div class="a" style="left:205.500px;top:7px;border:2.500px solid transparent;border-top:3px solid #9a9a9a"></div></div>
<div class="a" style="left:732px;top:118.700px;width:7.800px;height:7.800px;border:1px solid #d0d0d0"></div>
<span class="a" style="left:743.500px;top:118.700px;font-size:8.400px;color:#d6d6d6">Bảo vệ alpha</span>
<div class="a" style="left:831.5px;top:118.700px;width:7.800px;height:7.800px;border:1px solid #4a4a4a"></div>
<span class="a" style="left:842.500px;top:118.700px;font-size:8.400px;color:#6c6c6c">Xén bớt</span>
<div class="a" style="left:928.3px;top:118.700px;width:7.800px;height:7.800px;border:1px solid #d0d0d0"></div>
<span class="a" style="left:940.500px;top:118.700px;font-size:8.400px;color:#d6d6d6">Khóa</span>
<div class="a" style="left:726.800px;top:132.700px;width:280.700px;height:102.600px;background:#484848"></div>
<div class="a" style="left:726.800px;top:132.700px;width:280.700px;height:29px;background:#5b5b5b"></div>
<div class="a" style="left:726.800px;top:161.700px;width:280.700px;height:1.500px;background:#2c2c2c"></div>
<div class="a" style="left:726.800px;top:163.200px;width:14.200px;height:28.100px;background:#5b5b5b"></div>
<div class="a" style="left:741px;top:163.200px;width:266.500px;height:28.100px;background:#4d9ad6"></div>
<div class="a" style="left:726.800px;top:191.300px;width:280.700px;height:1px;background:#333"></div>
<div class="a" style="left:730.300px;top:173.800px;width:6.800px;height:6.800px;border-radius:50%;background:#e4e4e4"></div>
<div class="a" style="left:752.900px;top:134px;width:25.300px;height:26px;background-color:#fff;background-image:linear-gradient(45deg,#eee 25%,transparent 25%,transparent 75%,#eee 75%),linear-gradient(45deg,#eee 25%,transparent 25%,transparent 75%,#eee 75%);background-size:6px 6px;background-position:0 0,3px 3px"><svg class="a" style="left:0;top:0" width="25.300" height="26" viewBox="0 0 25.300 26"><rect x="2" y="1.800" width="21.400" height="18" fill="#000"/><circle cx="12.600" cy="11" r="9.200" fill="#eef0fb"/><ellipse cx="12.300" cy="5.800" rx="3" ry="1.600" fill="#6f8fdc"/><path d="M6 19.800c0-4 2.500-5.500 5-6.300l1.600 2.500 1.700-2.500c2.500.8 5 2.300 5 6.300z" fill="#1b3f86"/></svg></div>
<div class="a" style="left:752.900px;top:164.300px;width:25.300px;height:26px;background-color:#fff;background-image:linear-gradient(45deg,#eee 25%,transparent 25%,transparent 75%,#eee 75%),linear-gradient(45deg,#eee 25%,transparent 25%,transparent 75%,#eee 75%);background-size:6px 6px;background-position:0 0,3px 3px"><svg class="a" style="left:0;top:0" width="25.300" height="26" viewBox="0 0 25.300 26"><circle cx="12" cy="11.500" r="9.300" fill="#fbf8f7" stroke="#1a1a2a" stroke-width="1.200"/><circle cx="11.800" cy="10.500" r="3.200" fill="#e8c48c"/><path d="M8.500 6.500l4.800-1.200 3.800 2.400-1 1.800-6.600-.5z" fill="#2a3a9a"/><path d="M5.500 18c.3-3.500 3-5 6.500-5s6.200 1.500 6.500 5c-2 2.800-11 2.800-13 0z" fill="#122078"/><path d="M11 13.500h2l-1 3z" fill="#2ae8d8"/></svg></div>
<span class="a" style="left:791px;top:143px;font-size:9.100px;color:#e8e8e8">Lớp2</span>
<span class="a" style="left:791px;top:173px;font-size:9.100px;color:#fff;font-weight:bold">Lớp1</span>
<svg class="a" style="left:990.500px;top:170.500px" width="14" height="14" viewBox="0 0 14 14"><circle cx="7" cy="7" r="3.400" stroke="#fff" stroke-width="2.400" fill="none"/><path d="M7 .4v13.200M.4 7h13.200M2.300 2.300l9.400 9.400M11.700 2.300l-9.400 9.400" stroke="#fff" stroke-width="2" stroke-dasharray="2.400 8.400 2.400 20"/></svg>
<div class="a" style="left:1008.500px;top:132.700px;width:14px;height:102.600px;background:#2c2c2c"></div>
<div class="a" style="left:1012.500px;top:134.500px;border:3px solid transparent;border-top:0;border-bottom:4.500px solid #9a9a9a"></div>
<div class="a" style="left:1009.500px;top:141.500px;width:12px;height:84px;background:#6c6c6c;border-radius:4px"></div>
<div class="a" style="left:1012.500px;top:228.500px;border:3px solid transparent;border-bottom:0;border-top:4.500px solid #9a9a9a"></div>
<div class="sb " style="left:729.6px;top:238.6px;width:16.9px;height:17.4px;"><svg viewBox="0 0 17 17" ><path d="M4.500 3h5.500l3 3v8H4.500z" stroke="#e8e8e8" stroke-width="1.200" fill="none"/><path d="M10 3v3h3" stroke="#e8e8e8" stroke-width="1" fill="none"/></svg></div>
<div class="sb " style="left:749.9px;top:238.6px;width:16.9px;height:17.4px;"><svg viewBox="0 0 17 17" ><path d="M4.500 3h5.500l3 3v8H4.500z" stroke="#e8e8e8" stroke-width="1.200" fill="none"/><text x="8.700" y="12.500" font-size="6.500" font-family="Liberation Sans,sans-serif" fill="#e8e8e8" text-anchor="middle" font-weight="bold">8</text></svg></div>
<div class="sb " style="left:770px;top:238.6px;width:16.8px;height:17.4px;"><svg viewBox="0 0 17 17" ><path d="M4.500 3h5.500l3 3v8H4.500z" stroke="#e8e8e8" stroke-width="1.200" fill="none"/><text x="8.700" y="12.500" font-size="6.500" font-family="Liberation Sans,sans-serif" fill="#e8e8e8" text-anchor="middle" font-weight="bold">1</text></svg></div>
<div class="sb " style="left:790px;top:238.6px;width:22.5px;height:17.4px;"><svg viewBox="0 0 23 17" ><path d="M3.500 3h4.500l3 3v5M7 14H3.500V3" stroke="#e8e8e8" stroke-width="1.200" fill="none"/><path d="M7.500 11.500h5M10 9v5" stroke="#e8e8e8" stroke-width="1.400"/><path d="M15 7h5.500l-2.750 3.200z" fill="#e8e8e8"/></svg></div>
<div class="sb " style="left:815.9px;top:238.6px;width:16.9px;height:17.4px;"><svg viewBox="0 0 17 17" ><path d="M3.500 4.500h4l1.200 1.500h5v7.500H3.500z" fill="#e8e8e8"/></svg></div>
<div class="a" style="left:836.5px;top:243.5px;width:1px;height:8px;background:#555"></div>
<div class="sb " style="left:841.2px;top:238.6px;width:16.8px;height:17.4px;"><svg viewBox="0 0 17 17" ><path d="M3.800 6.500h7v7h-7z" stroke="#e8e8e8" stroke-width="1.100" fill="none"/><path d="M6.200 6.300V3.800h7v7h-2.300" stroke="#e8e8e8" stroke-width="1.100" fill="none"/></svg></div>
<div class="sb d" style="left:861.25px;top:238.6px;width:17.4px;height:17.4px;"><svg viewBox="0 0 17 17" ><path d="M4 3.500h3v3H4zM4 10.500h3v3H4zM9.500 6.500h4.500v4H9.500z" fill="#e8e8e8"/><path d="M5.500 6.500v4M7 8.500h2.500" stroke="#e8e8e8" stroke-width=".9"/></svg></div>
<div class="a" style="left:882.4px;top:243.5px;width:1px;height:8px;background:#555"></div>
<div class="sb " style="left:886.75px;top:238.6px;width:16.9px;height:17.4px;"><svg viewBox="0 0 17 17" ><path d="M4 5.500h9M6.500 5.500V4h4v1.500M5 6v8h7V6M7.300 7.500v5M9.700 7.500v5" stroke="#e8e8e8" stroke-width="1.200" fill="none"/></svg></div>
<div class="ph" style="left:725.6px;top:264px;width:298.4px"><span class="a" style="left:0;width:274.4px;top:3.800px;text-align:center">Hoa tiêu</span><svg class="a" style="right:16px;top:3.500px" width="6.800" height="6.500" viewBox="0 0 8 8"><path d="M3.500 1.500H.700v5.800h5.800V4.500" stroke="#bbb" stroke-width="1" fill="none"/><path d="M3.500 4.500L7.300.7M4.800.6h2.600v2.600" stroke="#bbb" stroke-width="1" fill="none"/></svg><svg class="a" style="right:3.500px;top:3.700px" width="6.500" height="6.300" viewBox="0 0 7 7"><path d="M.8.800l5.400 5.400M6.200.8L.8 6.200" stroke="#d8d8d8" stroke-width="1.700"/></svg></div>
<div class="sb " style="left:728.1px;top:282.6px;width:16.5px;height:17.3px;"><svg viewBox="0 0 17 17" ><circle cx="7.500" cy="7.500" r="3.800" stroke="#e8e8e8" stroke-width="1.300" fill="none"/><path d="M10.300 10.300l3.500 3.500" stroke="#e8e8e8" stroke-width="1.800"/><path d="M7.500 5.800v3.400" stroke="#e8e8e8" stroke-width="1"/></svg></div>
<div class="a" style="left:749.3px;top:287px;width:1px;height:8px;background:#555"></div>
<div class="sb " style="left:753.4px;top:282.6px;width:16.9px;height:17.3px;"><svg viewBox="0 0 17 17" ><circle cx="7.500" cy="7.500" r="3.800" stroke="#e8e8e8" stroke-width="1.300" fill="none"/><path d="M10.300 10.300l3.500 3.500" stroke="#e8e8e8" stroke-width="1.800"/><path d="M5.700 7.500h3.600M7.500 5.700v3.600" stroke="#e8e8e8" stroke-width="1"/></svg></div>
<div class="sb " style="left:773.7px;top:282.6px;width:16.9px;height:17.3px;"><svg viewBox="0 0 17 17" ><rect x="3.500" y="4" width="10" height="9" fill="#e8e8e8"/><path d="M5 5.500h2.500L5 8zM12 5.500H9.500L12 8zM5 11.500h2.500L5 9zM12 11.500H9.500L12 9z" fill="#4a4a4a"/></svg></div>
<div class="sb " style="left:794px;top:282.6px;width:16.8px;height:17.3px;"><svg viewBox="0 0 17 17" ><circle cx="7.500" cy="7.500" r="3.800" stroke="#e8e8e8" stroke-width="1.300" fill="none"/><path d="M10.300 10.300l3.500 3.500" stroke="#e8e8e8" stroke-width="1.800"/><path d="M5.700 7.500h3.600" stroke="#e8e8e8" stroke-width="1"/></svg></div>
<div class="a" style="left:815px;top:287px;width:1px;height:8px;background:#555"></div>
<div class="sb " style="left:819.25px;top:282.6px;width:17.2px;height:17.3px;"><svg viewBox="0 0 17 17" ><circle cx="8.500" cy="8.500" r="4.800" stroke="#e8e8e8" stroke-width="1.300" fill="none"/><circle cx="8.500" cy="8.500" r="2.600" fill="#e8e8e8"/><path d="M4.500 3l.3 3.500 3.300-.8z" fill="#e8e8e8"/></svg></div>
<div class="sb d" style="left:839.7px;top:282.6px;width:17px;height:17.3px;"><svg viewBox="0 0 17 17" ><rect x="5" y="5.500" width="7" height="6" fill="#e8e8e8"/><path d="M3 3.500l3 .3-2.700 2.700zM14 3.500l-3 .3 2.700 2.700zM3 13.500l3-.3-2.700-2.700zM14 13.500l-3-.3 2.700-2.700z" fill="#e8e8e8"/></svg></div>
<div class="sb " style="left:860px;top:282.6px;width:16.8px;height:17.3px;"><svg viewBox="0 0 17 17" ><circle cx="8.500" cy="8.500" r="4.800" stroke="#e8e8e8" stroke-width="1.300" fill="none"/><circle cx="8.500" cy="8.500" r="2.600" fill="#e8e8e8"/><path d="M12.500 3l-.3 3.500-3.300-.8z" fill="#e8e8e8"/></svg></div>
<div class="a" style="left:881px;top:287px;width:1px;height:8px;background:#555"></div>
<div class="sb " style="left:885.25px;top:282.6px;width:17.2px;height:17.3px;"><svg viewBox="0 0 17 17" ><path d="M8.500 3v11" stroke="#e8e8e8" stroke-width=".8" stroke-dasharray="1.500 1"/><path d="M3.500 13.500V8l3.500-3v8.500z" stroke="#e8e8e8" stroke-width="1.100" fill="none"/><path d="M13.500 13.500V8L10 5v8.500z" fill="#e8e8e8"/></svg></div>
<div class="a" style="left:725.6px;top:302.300px;width:298.4px;height:20.700px;background:#4a4a4a"></div>
<div class="a" style="left:865px;top:303.250px;width:18.750px;height:19.750px;background:#fdfcfc"></div>
<div class="a" style="left:865.600px;top:304.200px;width:16.800px;height:14.100px;background:#fbf8f7;border:1.600px solid #d8121c"><svg class="a" style="left:-.8px;top:-1.500px" width="15.200" height="13.300" viewBox="0 0 16.200 14.200"><circle cx="8" cy="7.300" r="5.600" fill="none" stroke="#111" stroke-width=".9"/><circle cx="7.900" cy="6.300" r="2" fill="#e8c48c"/><path d="M5.700 4l3-1 2.600 1.600-.7 1.200-4.300-.4z" fill="#2a3a9a"/><path d="M4 11c.3-2 2-3 4-3s3.700 1 4 3c-1.500 2-6.500 2-8 0z" fill="#122078"/></svg></div>
<div class="ph" style="left:725.6px;top:326px;width:298.4px"><span class="a" style="left:0;width:274.4px;top:3.800px;text-align:center">Brush Size</span><svg class="a" style="right:16px;top:3.500px" width="6.800" height="6.500" viewBox="0 0 8 8"><path d="M3.500 1.500H.700v5.800h5.800V4.500" stroke="#bbb" stroke-width="1" fill="none"/><path d="M3.500 4.500L7.300.7M4.800.6h2.600v2.600" stroke="#bbb" stroke-width="1" fill="none"/></svg><svg class="a" style="right:3.500px;top:3.700px" width="6.500" height="6.300" viewBox="0 0 7 7"><path d="M.8.800l5.400 5.400M6.200.8L.8 6.200" stroke="#d8d8d8" stroke-width="1.700"/></svg></div>
<div class="a" style="left:725.6px;top:342.500px;width:283px;height:136px;background:#464646"></div>
<svg class="a" style="left:724px;top:342px" width="272" height="114" viewBox="724 342 272 114" font-family="Liberation Sans,sans-serif" font-size="6.800" fill="#f0f0f0" text-anchor="middle"><rect x="725.20" y="342.70" width="29.12" height="36.40" fill="#595959"/><circle cx="739.76" cy="356.60" r="0.30" fill="#f2f2f2" opacity="0.50"/><text x="739.76" y="376.60">1</text><rect x="755.12" y="342.70" width="29.12" height="36.40" fill="#595959"/><circle cx="769.68" cy="356.60" r="0.50" fill="#f2f2f2" opacity="0.60"/><text x="769.68" y="376.60">1.5</text><rect x="785.04" y="342.70" width="29.12" height="36.40" fill="#595959"/><circle cx="799.60" cy="356.60" r="0.75" fill="#f2f2f2" opacity="0.72"/><text x="799.60" y="376.60">2</text><rect x="814.96" y="342.70" width="29.12" height="36.40" fill="#595959"/><circle cx="829.52" cy="356.60" r="1.10" fill="#f2f2f2" opacity="0.90"/><text x="829.52" y="376.60">3</text><rect x="844.88" y="342.70" width="29.12" height="36.40" fill="#595959"/><circle cx="859.44" cy="356.60" r="1.50" fill="#f2f2f2" opacity="1.00"/><text x="859.44" y="376.60">4</text><rect x="874.80" y="342.70" width="29.12" height="36.40" fill="#595959"/><circle cx="889.36" cy="356.60" r="1.80" fill="#f2f2f2" opacity="1.00"/><text x="889.36" y="376.60">5</text><rect x="904.72" y="342.70" width="29.12" height="36.40" fill="#595959"/><circle cx="919.28" cy="356.60" r="2.40" fill="#f2f2f2" opacity="1.00"/><text x="919.28" y="376.60">7</text><rect x="934.64" y="342.70" width="29.12" height="36.40" fill="#595959"/><circle cx="949.20" cy="356.60" r="3.30" fill="#f2f2f2" opacity="1.00"/><text x="949.20" y="376.60">10</text><rect x="964.56" y="342.70" width="29.12" height="36.40" fill="#595959"/><circle cx="979.12" cy="356.60" r="4.20" fill="#f2f2f2" opacity="1.00"/><text x="979.12" y="376.60">12</text><rect x="725.20" y="379.90" width="29.12" height="36.70" fill="#595959"/><circle cx="739.76" cy="394.50" r="5.70" fill="#f2f2f2" opacity="1.00"/><text x="739.76" y="414.60">15</text><rect x="755.12" y="379.90" width="29.12" height="36.70" fill="#595959"/><circle cx="769.68" cy="394.50" r="7.50" fill="#f2f2f2" opacity="1.00"/><text x="769.68" y="414.60">20</text><rect x="785.04" y="379.90" width="29.12" height="36.70" fill="#595959"/><circle cx="799.60" cy="394.50" r="9.00" fill="#f2f2f2" opacity="1.00"/><text x="799.60" y="414.60">25</text><rect x="814.96" y="379.90" width="29.12" height="36.70" fill="#595959"/><circle cx="829.52" cy="394.50" r="9.10" fill="#f2f2f2" opacity="1.00"/><text x="829.52" y="414.60">30</text><rect x="844.88" y="379.90" width="29.12" height="36.70" fill="#595959"/><circle cx="859.44" cy="394.50" r="9.10" fill="#f2f2f2" opacity="1.00"/><text x="859.44" y="414.60">40</text><rect x="874.80" y="379.90" width="29.12" height="36.70" fill="#595959"/><circle cx="889.36" cy="394.50" r="9.10" fill="#f2f2f2" opacity="1.00"/><text x="889.36" y="414.60">50</text><rect x="904.72" y="379.90" width="29.12" height="36.70" fill="#595959"/><circle cx="919.28" cy="394.50" r="9.10" fill="#f2f2f2" opacity="1.00"/><text x="919.28" y="414.60">70</text><rect x="934.64" y="379.90" width="29.12" height="36.70" fill="#595959"/><circle cx="949.20" cy="394.50" r="9.10" fill="#f2f2f2" opacity="1.00"/><text x="949.20" y="414.60">100</text><rect x="964.56" y="379.90" width="29.12" height="36.70" fill="#595959"/><circle cx="979.12" cy="394.50" r="9.10" fill="#f2f2f2" opacity="1.00"/><text x="979.12" y="414.60">150</text><rect x="725.20" y="417.40" width="29.12" height="36.20" fill="#595959"/><circle cx="739.76" cy="432.20" r="9.10" fill="#f2f2f2" opacity="1.00"/><text x="739.76" y="451.60">200</text><rect x="755.12" y="417.40" width="29.12" height="36.20" fill="#595959"/><circle cx="769.68" cy="432.20" r="9.10" fill="#f2f2f2" opacity="1.00"/><text x="769.68" y="451.60">300</text><rect x="785.04" y="417.40" width="29.12" height="36.20" fill="#595959"/><circle cx="799.60" cy="432.20" r="9.10" fill="#f2f2f2" opacity="1.00"/><text x="799.60" y="451.60">400</text><rect x="814.96" y="417.40" width="29.12" height="36.20" fill="#595959"/><circle cx="829.52" cy="432.20" r="9.10" fill="#f2f2f2" opacity="1.00"/><text x="829.52" y="451.60">500</text><rect x="844.88" y="417.40" width="29.12" height="36.20" fill="#595959"/><circle cx="859.44" cy="432.20" r="9.10" fill="#f2f2f2" opacity="1.00"/><text x="859.44" y="451.60">700</text><rect x="874.80" y="417.40" width="29.12" height="36.20" fill="#595959"/><circle cx="889.36" cy="432.20" r="9.10" fill="#f2f2f2" opacity="1.00"/><text x="889.36" y="451.60">1000</text></svg>
<div class="a" style="left:1008.600px;top:342.500px;width:14px;height:136px;background:#2c2c2c"></div>
<div class="a" style="left:1012.600px;top:344.500px;border:3px solid transparent;border-top:0;border-bottom:4.500px solid #9a9a9a"></div>
<div class="a" style="left:1009.600px;top:352.800px;width:12px;height:116.200px;background:#6c6c6c;border-radius:4px"></div>
<div class="a" style="left:1012.600px;top:471.500px;border:3px solid transparent;border-bottom:0;border-top:4.500px solid #9a9a9a"></div>
<div class="ph" style="left:725.6px;top:483px;width:298.4px"><span class="a" style="left:0;width:274.4px;top:3.800px;text-align:center">Reference</span><svg class="a" style="right:16px;top:3.500px" width="6.800" height="6.500" viewBox="0 0 8 8"><path d="M3.500 1.500H.700v5.800h5.800V4.500" stroke="#bbb" stroke-width="1" fill="none"/><path d="M3.500 4.500L7.300.7M4.800.6h2.600v2.600" stroke="#bbb" stroke-width="1" fill="none"/></svg><svg class="a" style="right:3.500px;top:3.700px" width="6.500" height="6.300" viewBox="0 0 7 7"><path d="M.8.800l5.400 5.400M6.200.8L.8 6.200" stroke="#d8d8d8" stroke-width="1.700"/></svg></div>
<div class="sb " style="left:727.75px;top:502px;width:16.9px;height:16.9px;"><svg viewBox="0 0 17 17" ><path d="M4.200 10a2.300 2.300 0 0 1 .3-4.500 3.200 3.200 0 0 1 6.200-.8 2.700 2.700 0 0 1 1.800 5.300z" fill="#f0f0f0"/><path d="M8.500 14V9M6.300 10.500l2.200-2.300 2.200 2.300" stroke="#4a4a4a" stroke-width="2.600" fill="none"/><path d="M8.500 14.500V9.500M6.500 10.800l2-2.200 2 2.200z" stroke="#f0f0f0" stroke-width="1.200" fill="#f0f0f0"/></svg></div>
<div class="sb " style="left:748px;top:502px;width:16.9px;height:16.9px;background:#585858"><svg viewBox="0 0 17 17" ><path d="M3.500 4.500h4l1 1.300h4.500v1.700H6L3.500 12z" fill="#e8e8e8"/><path d="M6.300 8h8.200l-2 5H3.800z" fill="#e8e8e8"/></svg></div>
<div class="sb d" style="left:768.4px;top:502px;width:17.1px;height:16.9px;"><svg viewBox="0 0 17 17" ><path d="M5.500 5.500l6 6M11.500 5.500l-6 6" stroke="#f0f0f0" stroke-width="1.700"/></svg></div>
<div class="a" style="left:789.6px;top:506px;width:1px;height:8px;background:#555"></div>
<div class="sb d" style="left:793.75px;top:502px;width:16.9px;height:16.9px;"><svg viewBox="0 0 17 17" ><circle cx="7.500" cy="7.500" r="3.800" stroke="#e8e8e8" stroke-width="1.300" fill="none"/><path d="M10.300 10.300l3.500 3.500" stroke="#e8e8e8" stroke-width="1.800"/><path d="M5.700 7.500h3.600M7.500 5.700v3.600" stroke="#e8e8e8" stroke-width="1"/></svg></div>
<div class="sb d" style="left:814px;top:502px;width:17.2px;height:16.9px;"><svg viewBox="0 0 17 17" ><rect x="3.500" y="4" width="10" height="9" fill="#e8e8e8"/><path d="M5 5.500h2.500L5 8zM12 5.500H9.500L12 8zM5 11.500h2.500L5 9zM12 11.500H9.500L12 9z" fill="#222"/></svg></div>
<div class="sb d" style="left:834.6px;top:502px;width:17.3px;height:16.9px;"><svg viewBox="0 0 17 17" ><circle cx="7.500" cy="7.500" r="3.800" stroke="#e8e8e8" stroke-width="1.300" fill="none"/><path d="M10.300 10.300l3.500 3.500" stroke="#e8e8e8" stroke-width="1.800"/><path d="M5.700 7.500h3.600" stroke="#e8e8e8" stroke-width="1"/></svg></div>
<div class="a" style="left:855.8px;top:506px;width:1px;height:8px;background:#555"></div>
<div class="sb d" style="left:860px;top:502px;width:16.8px;height:16.9px;"><svg viewBox="0 0 17 17" ><path d="M12 3l.8.800 1.300-.2.800.8-.4 1.200.8.800-1.700 1.600L10.300 4.700z" fill="#fff"/><path d="M10.500 6l2.200 2.200-5.300 5.400-2.500 1-.7-.7 1-2.500z" stroke="#fff" stroke-width="1.100" fill="none"/></svg></div>
<div class="sb " style="left:880px;top:502px;width:16.9px;height:16.9px;background:#4d9fdc"><svg viewBox="0 0 17 17" ><g transform="translate(1.300 0)"><g stroke="#fff" stroke-width="1.600" stroke-linecap="round" fill="none"><path d="M6.300 8.800L5.600 4M8.100 8.400L8 2.800M9.800 8.600L10.300 3.500M11.300 9.400L12.400 5.500M5.400 11.400L2.700 8.600"/></g><path d="M5.200 8.800C4.400 11.500 5.300 13.400 7.100 14.400h3.500c1.500-1.500 1.900-3.800 1.500-6z" fill="#fff"/></g></svg></div>
<div class="a" style="left:901.2px;top:506px;width:1px;height:8px;background:#555"></div>
<div class="sb d" style="left:905.2px;top:502px;width:16.9px;height:16.9px;"><svg viewBox="0 0 17 17" ><circle cx="8.500" cy="8.500" r="4.800" stroke="#e8e8e8" stroke-width="1.300" fill="none"/><circle cx="8.500" cy="8.500" r="2.600" fill="#e8e8e8"/><path d="M4.500 3l.3 3.500 3.300-.8z" fill="#e8e8e8"/></svg></div>
<div class="sb d" style="left:925.6px;top:502px;width:16.9px;height:16.9px;"><svg viewBox="0 0 17 17" ><rect x="5" y="5.500" width="7" height="6" fill="#e8e8e8"/><path d="M3 3.500l3 .3-2.700 2.700zM14 3.500l-3 .3 2.700 2.700zM3 13.500l3-.3-2.700-2.700zM14 13.500l-3-.3 2.700-2.700z" fill="#e8e8e8"/></svg></div>
<div class="sb d" style="left:946px;top:502px;width:16.9px;height:16.9px;"><svg viewBox="0 0 17 17" ><circle cx="8.500" cy="8.500" r="4.800" stroke="#e8e8e8" stroke-width="1.300" fill="none"/><circle cx="8.500" cy="8.500" r="2.600" fill="#e8e8e8"/><path d="M12.500 3l-.3 3.500-3.300-.8z" fill="#e8e8e8"/></svg></div>
<div class="a" style="left:967px;top:506px;width:1px;height:8px;background:#555"></div>
<div class="sb d" style="left:971px;top:502px;width:16.9px;height:16.9px;"><svg viewBox="0 0 17 17" ><path d="M8.500 3v11" stroke="#e8e8e8" stroke-width=".8" stroke-dasharray="1.500 1"/><path d="M3.500 13.500V8l3.500-3v8.500z" stroke="#e8e8e8" stroke-width="1.100" fill="none"/><path d="M13.500 13.500V8L10 5v8.500z" fill="#e8e8e8"/></svg></div>
<div class="a" style="left:725.300px;top:522px;width:298.700px;height:16.400px;background-color:#fdfdfd;background-image:linear-gradient(45deg,#ececec 25%,transparent 25%,transparent 75%,#ececec 75%),linear-gradient(45deg,#ececec 25%,transparent 25%,transparent 75%,#ececec 75%);background-size:6px 6px;background-position:0 0,3px 3px"></div>
<!-- STATUS BAR -->
<div id="status" class="a">
  <span class="a st" style="left:5px">5905 * 5988 pixel</span>
  <span class="a st" style="left:76px">(50 * 50.7cm)</span>
  <span class="a st" style="left:135px">300 dpi</span>
  <span class="a st" style="left:170.700px">12 %</span>
  <span class="a st" style="left:195.700px">( 5768, 4146 )</span>
  <span class="a st" style="left:253.700px;letter-spacing:.245px">Vẽ một đường thẳng bằng cách giữ phím Shift, Thay đổi cỡ cọ bằng cách giữ phím Ctrl, Alt và kéo</span>
</div>
<!-- TASKBAR -->
<div id="task" class="a"></div>
<svg class="a" style="left:7px;top:558.700px" width="13" height="12.500" viewBox="0 0 13 12.500"><path d="M0 1.700L5.400.9v5H0zM6.200.8L13 0v5.900H6.200zM0 6.700h5.400v5L0 10.900zM6.200 6.700H13v5.800l-6.800-.9z" fill="#fff"/></svg>
<svg class="a" style="left:34px;top:558.500px" width="14" height="14" viewBox="0 0 14 14"><circle cx="8.300" cy="5.500" r="4.300" stroke="#fff" stroke-width="1.200" fill="none"/><path d="M5.300 8.700L.8 13.200" stroke="#fff" stroke-width="1.400"/></svg>
<div class="a" style="left:61px;top:558.700px;width:13px;height:13px;border-radius:50%;border:1.800px solid #fff"></div>
<svg class="a" style="left:87.500px;top:558.500px" width="13" height="13" viewBox="0 0 13 13"><path d="M1 1.500h7.500M1 11.500h7.500" stroke="#fff" stroke-width="1.100"/><rect x="1.500" y="4" width="7" height="5" stroke="#fff" stroke-width="1.100" fill="none"/><path d="M11 1v3M11 5.500v6.500" stroke="#fff" stroke-width="1.400"/></svg>
<svg class="a" style="left:117.500px;top:558.500px" width="14" height="13" viewBox="0 0 14 13"><path d="M.5 1.500h4.500l1 1.200h7.500v3H.5z" fill="#e8a92c"/><path d="M.5 4h13v8.500H.5z" fill="#f7cf5c"/><path d="M3.500 8.500h7v4h-7z" fill="#4c9be0"/><path d="M5 10h4v2.500H5z" fill="#f7cf5c"/></svg>
<svg class="a" style="left:145px;top:558px" width="13" height="14" viewBox="0 0 13 14"><path d="M4 3.500V2a1 1 0 0 1 1-1h3a1 1 0 0 1 1 1v1.500" stroke="#f4f4f4" stroke-width="1" fill="none"/><path d="M.5 3.500h12v9.500H.5z" fill="#f4f4f4"/><path d="M3.800 5.800h2.300v2.300H3.800z" fill="#f25022"/><path d="M6.900 5.800h2.300v2.300H6.900z" fill="#7fba00"/><path d="M3.800 8.900h2.300v2.300H3.800z" fill="#00a4ef"/><path d="M6.900 8.900h2.300v2.300H6.900z" fill="#ffb900"/></svg>
<svg class="a" style="left:172.500px;top:560px" width="14" height="10.500" viewBox="0 0 14 10.500"><path d="M0 1h14v9.500H0z" fill="#1488d8"/><path d="M0 1l7 5 7-5v-1H0z" fill="#5cc0f8"/><path d="M0 1l7 5.200L14 1" stroke="#0a5ea8" stroke-width=".6" fill="none"/></svg>
<svg class="a" style="left:200px;top:558px" width="14" height="14" viewBox="0 0 14 14"><defs><linearGradient id="eg" x1="0" y1="0" x2="1" y2="1"><stop offset="0" stop-color="#35c1f1"/><stop offset=".5" stop-color="#1b8fd6"/><stop offset="1" stop-color="#38d27a"/></linearGradient></defs><circle cx="7" cy="7" r="6.600" fill="url(#eg)"/><path d="M3 9.500c0-3 2-5 4.500-5s4 1.500 4 3.200c0 1.300-1 2-2.200 2-1 0-1.600-.4-1.600-1 0-.5.400-.8.400-1.400 0-.7-.6-1.200-1.500-1.200C5.300 6.100 4.500 7.300 4.500 8.800c0 2 1.500 3.700 4 3.700-2.500 1.300-5.500-.3-5.500-3z" fill="#0c59a4"/></svg>
<svg class="a" style="left:229.300px;top:559.200px" width="11.200" height="11.200" viewBox="0 0 13 13"><circle cx="6.500" cy="6.500" r="6.300" fill="#e8453c"/><path d="M6.500 6.500L1 3.500A6.300 6.300 0 0 0 5.500 12.700z" fill="#34a853"/><path d="M6.500 6.500l-1 6.200A6.300 6.300 0 0 0 12.300 4H6.500z" fill="#fbbc05"/><path d="M1.100 3.400A6.300 6.300 0 0 1 12.300 4H6.500z" fill="#e8453c"/><circle cx="6.500" cy="6.500" r="2.900" fill="#fff"/><circle cx="6.500" cy="6.500" r="2.300" fill="#4285f4"/></svg>
<div class="a" style="left:224px;top:574.200px;width:20.600px;height:1.800px;background:#8cc0ea"></div>
<div class="a" style="left:249px;top:553.500px;width:27.400px;height:22.500px;background:#d4701c"></div>
<svg class="a" style="left:256px;top:558.200px" width="13" height="13" viewBox="0 0 13 13"><rect x=".8" y=".8" width="11.400" height="11.400" rx="3.800" fill="#fff" stroke="#3a78e0" stroke-width="1.100"/><text x="6.500" y="7.900" font-family="Liberation Sans,sans-serif" font-size="4.300" font-weight="bold" fill="#2d6be0" text-anchor="middle">zoom</text></svg>
<div class="a" style="left:249px;top:574.700px;width:27.400px;height:1.300px;background:#ee8a3a"></div>
<div class="a" style="left:277px;top:553.500px;width:27px;height:22.500px;background:#595757"></div>
<div class="a" style="left:277px;top:574.200px;width:27px;height:1.800px;background:#8cc0ea"></div>
<div class="a" style="left:283.900px;top:558.500px;width:12px;height:12.500px;background:#fafafa;border-radius:2.500px"><svg class="a" style="left:-.5px;top:0" width="13" height="13" viewBox="0 0 13 13"><path d="M6.500 2.500c2.500 0 4 1.800 4 4s-1.700 4-4 4-4-1.800-4-4c0-1 .3-1.800 1-2.600z" fill="#2fae6a"/><path d="M6.500 2.500c.8-1 2-1.300 3-.8-.3 1.300-.3 2.500.5 3.600-1.300.2-2.700-.6-3.500-2.800z" fill="#e8453c"/><path d="M4 8.500c1 .8 2.500 1 4 .3-.5 1.300-2.500 2-4-.3z" fill="#2a8ad8"/></svg></div>
<svg class="a" style="left:2.800px;top:4px" width="9.500" height="9.500" viewBox="0 0 13 13"><circle cx="6.500" cy="6.500" r="6" fill="#fff"/><path d="M6.500 6.500L1.500 4A5.500 5.500 0 0 1 9 1.600z" fill="#f0c020"/><path d="M6.500 6.500L9 1.600a5.500 5.500 0 0 1 2.900 5.600z" fill="#e83828"/><path d="M6.500 6.500l5.400.7A5.500 5.500 0 0 1 5 11.800z" fill="#28a8e0"/><path d="M6.500 6.500L5 11.800A5.500 5.500 0 0 1 1.500 4z" fill="#38b048"/><circle cx="6.500" cy="6.500" r="2" fill="#fff"/></svg>
<div class="a" style="left:921px;top:0;width:32px;height:16px;background:#e5e5e5"></div>
<div class="a" style="left:933px;top:8px;width:8px;height:1px;background:#222"></div>
<svg class="a" style="left:966px;top:3px" width="10" height="10" viewBox="0 0 10 10"><path d="M1 3h6v6H1zM3 3V1h6v6H7" stroke="#222" stroke-width="1" fill="none"/></svg>
<svg class="a" style="left:1001px;top:3.500px" width="9" height="9" viewBox="0 0 9 9"><path d="M.5.500l8 8M8.500.500l-8 8" stroke="#222" stroke-width="1"/></svg>
<div class="a" style="left:756.500px;top:558px;width:14.500px;height:14.500px;border-radius:50%;background:radial-gradient(circle at 40% 35%,#ffd040,#f8a010)"></div>
<span class="a" style="left:778.700px;top:561.200px;font-size:10px;color:#f4f4f4;letter-spacing:-.25px">37°C</span>
<span class="a" style="left:806.500px;top:561.200px;font-size:10px;color:#f4f4f4;letter-spacing:-.25px">Sunny</span>
<svg class="a" style="left:843.500px;top:562px" width="9" height="6" viewBox="0 0 9 6"><path d="M.7 5.200L4.500 1.200l3.800 4" stroke="#fff" stroke-width="1.100" fill="none"/></svg>
<svg class="a" style="left:862.500px;top:559.500px" width="9" height="12" viewBox="0 0 9 12"><rect x=".8" y="2.800" width="5.500" height="6" rx=".8" stroke="#fff" stroke-width="1" fill="none"/><path d="M6.500 5l2-1v3.600l-2-1M2 .8h3.500M2 11h3.500" stroke="#fff" stroke-width=".9" fill="none"/></svg>
<svg class="a" style="left:878px;top:560px" width="13" height="11" viewBox="0 0 13 11"><path d="M3.500.7h9v6h-7" stroke="#fff" stroke-width="1" fill="none"/><path d="M.6 3.500h4.500v3.800H.6zM2.800 7.500v2.500M.8 10.300h5M8 7v3h-2" stroke="#fff" stroke-width="1" fill="none"/></svg>
<svg class="a" style="left:896px;top:560px" width="13" height="11" viewBox="0 0 13 11"><path d="M.8 3.800h2L5.500 1.300v8.400L2.800 7.200h-2z" stroke="#fff" stroke-width=".9" fill="none"/><path d="M7 3.700c.9.900.9 2.700 0 3.600M8.700 2.300c1.700 1.700 1.700 4.700 0 6.400M10.400 1c2.400 2.400 2.400 6.600 0 9" stroke="#fff" stroke-width=".9" fill="none"/></svg>
<span class="a" style="left:916.500px;top:561.500px;font-size:8.500px;color:#f0f0f0">ENG</span>
<span class="a" style="left:945.300px;top:561.500px;font-size:8.500px;color:#f0f0f0">3:30 PM</span>
<svg class="a" style="left:993px;top:559.500px" width="12" height="12" viewBox="0 0 12 12"><path d="M.5.500h11v8.500H7.500L6 11 4.500 9H.5z" fill="#fff"/><path d="M2.500 3h7M2.500 5h7M2.500 7h4.500" stroke="#333" stroke-width=".8"/></svg>
<div class="a" style="left:1019.500px;top:554px;width:1px;height:22px;background:#8a8088"></div>
</body>
</html>
